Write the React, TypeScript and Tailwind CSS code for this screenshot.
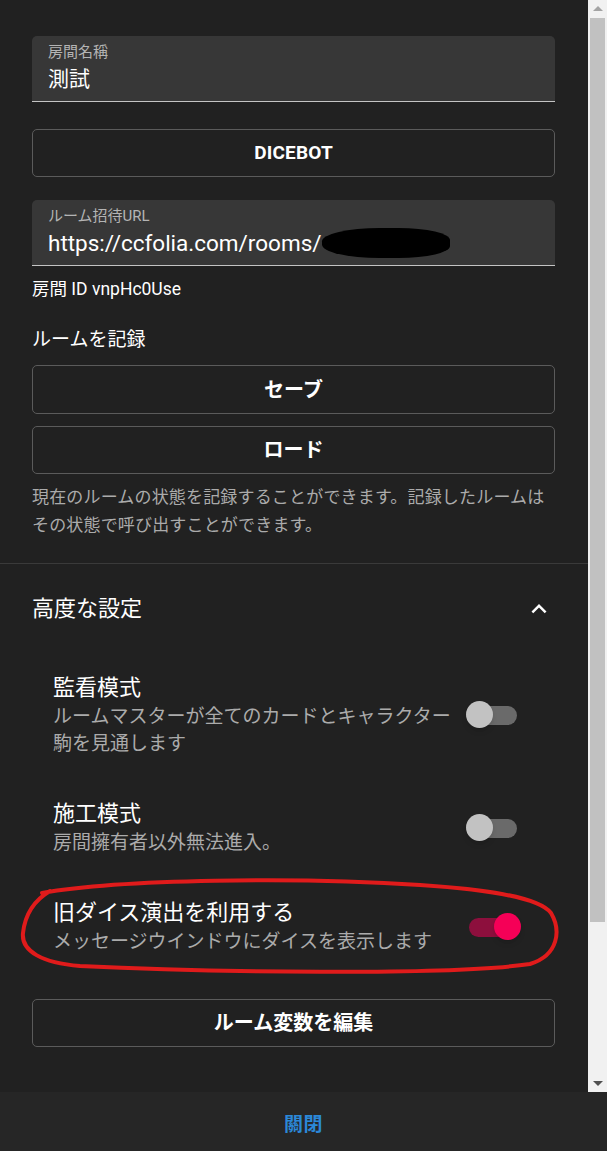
import React from "react";

const Field = ({ label, children }: { label: string; children: React.ReactNode }) => (
  <div className="h-[66px] rounded-t-[5px] bg-[#373737] border-b border-[#c4c4c4] pl-4 pr-3 pt-[6px]">
    <div className="text-[15px] leading-[20px] text-[#b4b4b4]">{label}</div>
    <div className="mt-[2px] text-[21px] leading-[30px] text-white whitespace-nowrap">{children}</div>
  </div>
);

const OutlineButton = ({ children, className = "" }: { children: React.ReactNode; className?: string }) => (
  <button className={`w-full flex items-center justify-center rounded-[5px] border border-[#5b5b5b] text-white font-bold ${className}`}>
    {children}
  </button>
);

const Toggle = ({ on }: { on?: boolean }) => (
  <div className="relative w-[55px] h-[28px] shrink-0">
    <div className={`absolute left-[3px] top-[5px] w-[48px] h-[19px] rounded-full ${on ? "bg-[#8d0f3d]" : "bg-[#6a6a6a]"}`}></div>
    <div
      className={`absolute top-0 w-[27px] h-[27px] rounded-full shadow-md ${on ? "left-[28px] bg-[#f50057]" : "left-0 bg-[#c2c2c2]"}`}
    ></div>
  </div>
);

const SettingRow = ({ title, sub, on, className = "" }: { title: string; sub: string; on?: boolean; className?: string }) => (
  <div className={`flex items-center pl-[21px] pr-[34px] ${className}`}>
    <div className="flex-1 min-w-0">
      <div className="text-[22px] leading-[30px] text-white">{title}</div>
      <div className="text-[19px] leading-[27px] text-[#ababab]">{sub}</div>
    </div>
    <Toggle on={on} />
  </div>
);

const App = () => {
  return (
    <div className="w-[607px] h-[1151px] bg-[#212121] flex flex-col overflow-hidden font-['Roboto','Noto_Sans_CJK_JP',sans-serif]">
      <div className="flex flex-1 min-h-0">
        {/* scrolling settings panel */}
        <div className="relative flex-1 overflow-hidden">
          <div className="pl-8 pr-[33px] pt-9">
            <Field label="房間名稱">測試</Field>

            <OutlineButton className="mt-[27px] h-[48px] text-[19px] tracking-[0.01em]">DICEBOT</OutlineButton>

            <div className="mt-[23px]">
              <Field label="ルーム招待URL">
                <span className="text-[22.5px]">https://ccfolia.com/rooms/</span>
                <span className="inline-block align-middle w-[128px] h-[30px] -mt-[4px] bg-black rounded-[45%_40%_40%_45%]"></span>
              </Field>
            </div>

            <div className="mt-[13px] text-[17.5px] leading-[20px] text-white">房間 ID vnpHc0Use</div>

            <div className="mt-[28px] text-[19px] leading-[26px] text-white">ルームを記録</div>
            <OutlineButton className="mt-[12px] h-[49px] text-[20px]">セーブ</OutlineButton>
            <OutlineButton className="mt-[12px] h-[48px] text-[20px]">ロード</OutlineButton>
            <p className="mt-[9px] text-[17px] tracking-[0.01em] leading-[28px] text-[#ababab]">
              現在のルームの状態を記録することができます。記録したルームはその状態で呼び出すことができます。
            </p>
          </div>

          <div className="mt-[24px] border-t border-[#3a3a3a]"></div>

          <div className="pl-8 pr-[33px]">
            <div className="mt-[30px] flex items-center justify-between">
              <span className="text-[22px] leading-[30px] text-white">高度な設定</span>
              <svg viewBox="0 0 24 24" className="w-[30px] h-[30px] mr-[1px] fill-white">
                <path d="M12 8l-6 6 1.41 1.41L12 10.83l4.59 4.58L18 14z" />
              </svg>
            </div>

            <SettingRow
              className="mt-[49px]"
              title="監看模式"
              sub="ルームマスターが全てのカードとキャラクター駒を見通します"
            />
            <SettingRow className="mt-[42px]" title="施工模式" sub="房間擁有者以外無法進入。" />
            <SettingRow
              className="mt-[42px]"
              title="旧ダイス演出を利用する"
              sub="メッセージウインドウにダイスを表示します"
              on
            />

            <OutlineButton className="mt-[44px] h-[48px] text-[20px]">ルーム変数を編集</OutlineButton>
          </div>

          {/* hand-drawn red highlight */}
          <svg className="absolute left-0 top-0 w-[588px] h-[1092px] pointer-events-none" viewBox="0 0 588 1092">
            <path
              d="M42 893 C120 879 300 877 420 885 C480 889 538 896 551 913 C561 930 559 955 530 964 C450 976 200 972 80 966 C42 963 21 951 23 933 C25 915 33 901 50 891"
              fill="none"
              stroke="#e01b1b"
              strokeWidth="4"
              strokeLinecap="round"
            />
          </svg>
        </div>

        {/* scrollbar */}
        <div className="w-[19px] bg-[#f1f1f1] flex flex-col items-center">
          <div className="h-[17px] flex items-center justify-center">
            <div className="w-0 h-0 border-l-[5px] border-r-[5px] border-b-[5px] border-l-transparent border-r-transparent border-b-[#a3a3a3]"></div>
          </div>
          <div className="mt-[1px] w-[15px] h-[904px] bg-[#c1c1c1]"></div>
          <div className="flex-1"></div>
          <div className="h-[17px] flex items-center justify-center">
            <div className="w-0 h-0 border-l-[5px] border-r-[5px] border-t-[5px] border-l-transparent border-r-transparent border-t-[#505050]"></div>
          </div>
        </div>
      </div>

      <div className="h-[59px] shrink-0 bg-[#262626] flex items-center justify-center pt-[7px]">
        <span className="text-[19px] font-bold text-[#2b88d8] tracking-[0.02em]">關閉</span>
      </div>
    </div>
  );
};

export default App;
